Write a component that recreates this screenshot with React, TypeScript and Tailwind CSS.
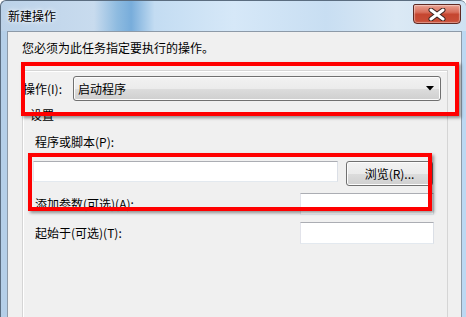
import React from "react";

const font = { fontFamily: '"Noto Sans CJK SC", "Noto Sans", sans-serif' };

function TextBox({ className }: { className: string }) {
  return (
    <div
      className={`bg-white border border-t-[#abadb3] border-l-[#e2e3ea] border-r-[#dbdfe6] border-b-[#e3e9ef] ${className}`}
    />
  );
}

function CloseButton() {
  return (
    <div className="mr-[5px] mt-[3px] flex h-[20px] w-[48px] items-center justify-center rounded-b-[4px] rounded-t-[2px] border border-[#5e2a24] bg-[linear-gradient(#e9a192_0%,#d86f5c_40%,#c54630_52%,#c94f38_100%)] shadow-[inset_0_0_1px_1px_rgba(255,255,255,0.4)]">
      <svg width="18" height="13" viewBox="0 0 18 13">
        <path d="M3 2 L15 11 M15 2 L3 11" stroke="#3a2420" strokeWidth="5" strokeLinecap="round" />
        <path d="M3 2 L15 11 M15 2 L3 11" stroke="#ffffff" strokeWidth="3" strokeLinecap="round" />
      </svg>
    </div>
  );
}

export default function App() {
  return (
    <div
      className="relative flex h-[317px] w-[466px] flex-col overflow-hidden rounded-t-[6px] border-t border-l border-[#5b6d80] bg-[linear-gradient(90deg,#bcd2e8_0%,#c8dbee_20%,#8ebbe0_25%,#78addb_28%,#c3dcf2_33%,#d6e8f8_50%,#c8def2_70%,#dbe9f5_85%,#cfe2f2_100%)] text-[12px] text-black"
      style={font}
    >
      {/* title bar */}
      <div className="flex h-[30px] shrink-0 items-start justify-between">
        <div className="pl-[7px] pt-[7px] leading-[16px] text-[12px] [text-shadow:0_0_6px_#ffffff,0_0_3px_#ffffff]">
          新建操作
        </div>
        <CloseButton />
      </div>

      {/* frame + client */}
      <div className="flex min-h-0 flex-1">
        <div className="w-[6px] shrink-0 bg-[#b5cfe8]" />
        <div className="flex min-w-0 flex-1 flex-col border-t border-l border-r border-[#8d9aa8] bg-[#f0f0f0]">
          <div className="pl-[14px] pt-[8px] leading-[16px]">您必须为此任务指定要执行的操作。</div>

          <div className="ml-[14px] mt-[14px] flex w-[426px] flex-1 flex-col border-t border-l border-r border-[#d5d5d5] shadow-[inset_1px_1px_0_#ffffff]">
            {/* action row */}
            <div className="mt-[5px] flex items-center">
              <div className="w-[50px] leading-[16px]">操作(I):</div>
              <div className="flex h-[25px] w-[368px] items-center justify-between rounded-[3px] border border-[#707070] bg-[linear-gradient(#f2f2f2_0%,#ebebeb_50%,#dddddd_50%,#cfcfcf_100%)] pl-[4px] pr-[6px] shadow-[inset_0_0_0_1px_#fcfcfc]">
                <span className="leading-[16px]">启动程序</span>
                <svg width="8" height="5" viewBox="0 0 8 5">
                  <path d="M0 0 H8 L4 4.5 Z" fill="#000000" />
                </svg>
              </div>
            </div>

            <div className="ml-[7px] mt-[6px] leading-[16px]">设置</div>

            <div className="ml-[12px] mt-[11px] leading-[16px]">程序或脚本(P):</div>

            <div className="ml-[10px] mt-[11px] flex items-start gap-[8px]">
              <TextBox className="h-[21px] w-[305px]" />
              <div className="flex h-[25px] w-[87px] items-center justify-center rounded-[3px] border border-[#707070] bg-[linear-gradient(#f2f2f2_0%,#ebebeb_50%,#dddddd_50%,#cfcfcf_100%)] shadow-[inset_0_0_0_1px_#fcfcfc]">
                <span className="leading-[16px]">浏览(R)...</span>
              </div>
            </div>

            <div className="mt-[7px] flex h-[22px] items-center justify-between pl-[12px] pr-[13px]">
              <span className="leading-[16px]">添加参数(可选)(A):</span>
              <TextBox className="h-[22px] w-[134px]" />
            </div>

            <div className="mt-[7px] flex h-[22px] items-center justify-between pl-[12px] pr-[13px]">
              <span className="leading-[16px]">起始于(可选)(T):</span>
              <TextBox className="h-[22px] w-[134px]" />
            </div>
          </div>
        </div>
        <div className="w-[4px] shrink-0 bg-[#bcd8f2]" />
      </div>

      {/* annotation boxes */}
      <div className="absolute left-[20px] top-[61px] h-[54px] w-[438px] border-[4px] border-[#ff0000] shadow-[2px_2px_3px_rgba(0,0,0,0.4)]" />
      <div className="absolute left-[27px] top-[152px] h-[58px] w-[404px] border-[4px] border-[#ff0000] shadow-[2px_2px_3px_rgba(0,0,0,0.4)]" />
    </div>
  );
}
